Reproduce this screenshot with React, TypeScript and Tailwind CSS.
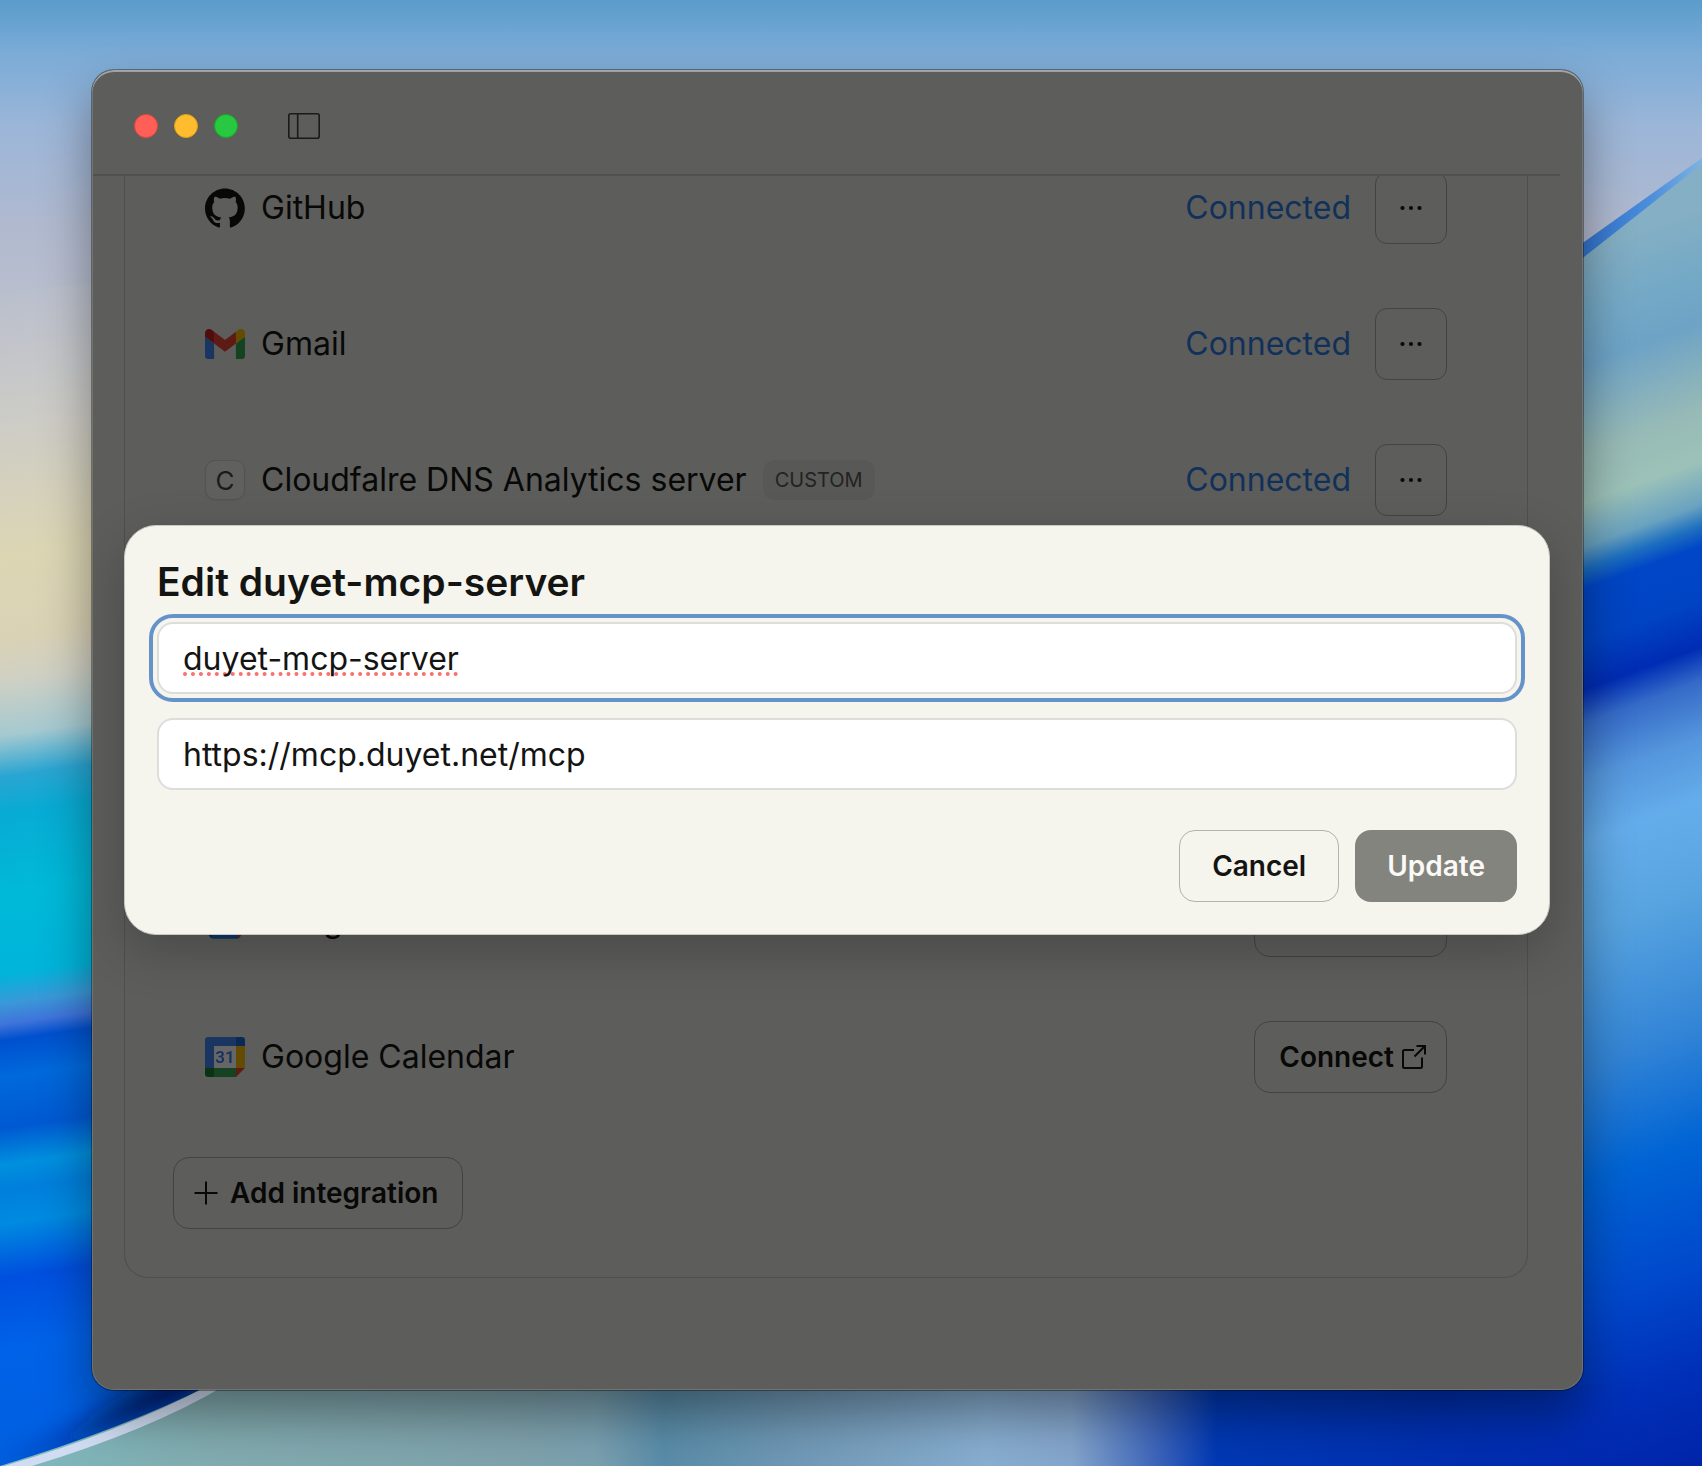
import React from 'react';

function Wallpaper() {
  return (
    <svg
      className="absolute inset-0 h-full w-full"
      viewBox="0 0 1702 1466"
      preserveAspectRatio="none"
      aria-hidden="true"
    >
      <defs>
        <linearGradient id="sky" gradientUnits="userSpaceOnUse" x1="0" y1="0" x2="0" y2="320">
          <stop offset="0" stopColor="#5a9ccb" />
          <stop offset="0.16" stopColor="#7aabd7" />
          <stop offset="0.4" stopColor="#9cb6d8" />
          <stop offset="0.7" stopColor="#b0b9cf" />
          <stop offset="1" stopColor="#bcc0cd" />
        </linearGradient>
        <linearGradient id="left" gradientUnits="userSpaceOnUse" x1="0" y1="0" x2="0" y2="1466">
          <stop offset="0.2" stopColor="#babfcd" />
          <stop offset="0.29" stopColor="#cdccc6" />
          <stop offset="0.38" stopColor="#dcd6b4" />
          <stop offset="0.435" stopColor="#dad2b5" />
          <stop offset="0.465" stopColor="#cfd0c4" />
          <stop offset="0.502" stopColor="#a5c9d0" />
          <stop offset="0.53" stopColor="#2aa5d2" />
          <stop offset="0.555" stopColor="#08abd4" />
          <stop offset="0.61" stopColor="#00b9d8" />
          <stop offset="0.665" stopColor="#00b4da" />
          <stop offset="0.685" stopColor="#3a98d8" />
          <stop offset="0.699" stopColor="#3f74da" />
          <stop offset="0.71" stopColor="#0050ce" />
          <stop offset="0.735" stopColor="#0069db" />
          <stop offset="0.77" stopColor="#0059d2" />
          <stop offset="0.795" stopColor="#0090de" />
          <stop offset="0.812" stopColor="#007fdc" />
          <stop offset="0.835" stopColor="#008ae0" />
          <stop offset="0.872" stopColor="#004fde" />
          <stop offset="0.92" stopColor="#0062e8" />
          <stop offset="1" stopColor="#005fe0" />
        </linearGradient>
        <linearGradient id="right" gradientUnits="userSpaceOnUse" x1="0" y1="252" x2="0" y2="1510">
          <stop offset="0" stopColor="#84afc4" />
          <stop offset="0.05" stopColor="#74a9c6" />
          <stop offset="0.09" stopColor="#6ea3c6" />
          <stop offset="0.16" stopColor="#97bab6" />
          <stop offset="0.2" stopColor="#9cc2b8" />
          <stop offset="0.235" stopColor="#69a2c0" />
          <stop offset="0.252" stopColor="#1e70c0" />
          <stop offset="0.268" stopColor="#0046c6" />
          <stop offset="0.31" stopColor="#0044c4" />
          <stop offset="0.348" stopColor="#002cb4" />
          <stop offset="0.375" stopColor="#356bc8" />
          <stop offset="0.42" stopColor="#5596dc" />
          <stop offset="0.47" stopColor="#64adeb" />
          <stop offset="0.54" stopColor="#58a4e0" />
          <stop offset="0.65" stopColor="#3284d6" />
          <stop offset="0.74" stopColor="#0064d4" />
          <stop offset="0.84" stopColor="#0048cc" />
          <stop offset="0.92" stopColor="#0030b8" />
          <stop offset="1" stopColor="#0024a8" />
        </linearGradient>
        <linearGradient id="bottom" gradientUnits="userSpaceOnUse" x1="0" y1="1466" x2="1702" y2="1466">
          <stop offset="0" stopColor="#7cb9be" />
          <stop offset="0.12" stopColor="#82acb0" />
          <stop offset="0.3" stopColor="#7fa2ac" />
          <stop offset="0.35" stopColor="#7aa0b0" />
          <stop offset="0.39" stopColor="#598ca8" />
          <stop offset="0.47" stopColor="#7199b6" />
          <stop offset="0.58" stopColor="#88aed0" />
          <stop offset="0.63" stopColor="#84a5cc" />
          <stop offset="0.68" stopColor="#3c64ba" />
          <stop offset="0.715" stopColor="#0038b4" />
          <stop offset="0.85" stopColor="#002fb0" />
          <stop offset="0.95" stopColor="#0028ac" stopOpacity="0" />
        </linearGradient>
        <linearGradient id="edge" x1="0" y1="0" x2="1" y2="0">
          <stop offset="0" stopColor="#2f6fca" />
          <stop offset="0.6" stopColor="#4a8ddb" />
          <stop offset="1" stopColor="#7fb2e2" />
        </linearGradient>
        <filter id="soft" x="-20%" y="-20%" width="140%" height="140%">
          <feGaussianBlur stdDeviation="12" />
        </filter>
      </defs>
      <g transform="skewY(-8)">
        <rect x="-10" y="200" width="860" height="1500" fill="url(#left)" />
      </g>
      <g transform="translate(1583 0) skewY(-20)">
        <rect x="-733" y="100" width="860" height="1652" fill="url(#right)" />
      </g>
      <path d="M0 0H1702V160L1583 250L850 700L300 260L0 293Z" fill="url(#sky)" />
      <path d="M1570 252L1702 158V164L1570 268Z" fill="url(#edge)" />
      <path d="M0 1466Q130 1425 215 1385L180 1370L60 1440Z" fill="#00145e" filter="url(#soft)" />
      <path d="M0 1466Q125 1428 212 1384H1702V1466Z" fill="url(#bottom)" />
      <path d="M4 1466Q120 1432 208 1386H224Q150 1430 32 1466Z" fill="#cfdcf2" />
    </svg>
  );
}

function GitHubIcon() {
  return (
    <svg viewBox="0 0 98 96" className="h-10 w-10 shrink-0" fill="#080808" aria-hidden="true">
      <path
        fillRule="evenodd"
        clipRule="evenodd"
        d="M48.854 0C21.839 0 0 22 0 49.217c0 21.756 13.993 40.172 33.405 46.69 2.427.49 3.316-1.059 3.316-2.362 0-1.141-.08-5.052-.08-9.127-13.59 2.934-16.42-5.867-16.42-5.867-2.184-5.704-5.42-7.17-5.42-7.17-4.448-3.015.324-3.015.324-3.015 4.934.326 7.523 5.052 7.523 5.052 4.367 7.496 11.404 5.378 14.235 4.074.404-3.178 1.699-5.378 3.074-6.6-10.839-1.141-22.243-5.378-22.243-24.283 0-5.378 1.94-9.778 5.014-13.2-.485-1.222-2.184-6.275.486-13.038 0 0 4.125-1.304 13.426 5.052a46.97 46.97 0 0 1 12.214-1.63c4.125 0 8.33.571 12.213 1.63 9.302-6.356 13.427-5.052 13.427-5.052 2.67 6.763.97 11.816.485 13.038 3.155 3.422 5.015 7.822 5.015 13.2 0 18.905-11.404 23.06-22.324 24.283 1.78 1.548 3.316 4.481 3.316 9.126 0 6.6-.08 11.897-.08 13.526 0 1.304.89 2.853 3.316 2.364 19.412-6.52 33.405-24.935 33.405-46.691C97.707 22 75.788 0 48.854 0z"
      />
    </svg>
  );
}

function GmailIcon() {
  return (
    <svg viewBox="52 42 88 66" className="w-10 shrink-0 brightness-[0.4]" aria-hidden="true">
      <path fill="#4285f4" d="M58 108h14V74L52 59v43c0 3.32 2.69 6 6 6" />
      <path fill="#34a853" d="M120 108h14c3.32 0 6-2.69 6-6V59l-20 15" />
      <path fill="#fbbc04" d="M120 48v26l20-15v-8c0-7.42-8.47-11.65-14.4-7.2" />
      <path fill="#ea4335" d="M72 74V48l24 18 24-18v26L96 92" />
      <path fill="#c5221f" d="M52 51v8l20 15V48l-5.6-4.2c-5.94-4.45-14.4-.22-14.4 7.2" />
    </svg>
  );
}

function DriveIcon() {
  return (
    <svg viewBox="0 0 87.3 78" className="w-10 shrink-0 brightness-[0.4]" aria-hidden="true">
      <path fill="#0066da" d="m6.6 66.85 3.85 6.65c.8 1.4 1.95 2.5 3.3 3.3l13.75-23.8h-27.5c0 1.55.4 3.1 1.2 4.5z" />
      <path fill="#00ac47" d="m43.65 25-13.75-23.8c-1.35.8-2.5 1.9-3.3 3.3l-25.4 44a9.06 9.06 0 0 0 -1.2 4.5h27.5z" />
      <path fill="#ea4335" d="m73.55 76.8c1.35-.8 2.5-1.9 3.3-3.3l1.6-2.75 7.65-13.25c.8-1.4 1.2-2.95 1.2-4.5h-27.502l5.852 11.5z" />
      <path fill="#00832d" d="m43.65 25 13.75-23.8c-1.35-.8-2.9-1.2-4.5-1.2h-18.5c-1.6 0-3.15.45-4.5 1.2z" />
      <path fill="#2684fc" d="m59.8 53h-32.3l-13.75 23.8c1.35.8 2.9 1.2 4.5 1.2h50.8c1.6 0 3.15-.45 4.5-1.2z" />
      <path fill="#ffba00" d="m73.4 26.5-12.7-22c-.8-1.4-1.95-2.5-3.3-3.3l-13.75 23.8 16.15 28h27.45c0-1.55-.4-3.1-1.2-4.5z" />
    </svg>
  );
}

function CalendarIcon() {
  return (
    <svg viewBox="0 0 40 40" className="h-10 w-10 shrink-0 brightness-[0.4]" aria-hidden="true">
      <path fill="#fff" d="M9 9h22v22H9z" />
      <path fill="#4285f4" d="M31 0H3a3 3 0 0 0-3 3v28h9V9h22z" />
      <path fill="#1967d2" d="M31 0v9h9V3a3 3 0 0 0-3-3z" />
      <path fill="#fbbc04" d="M31 9h9v22h-9z" />
      <path fill="#34a853" d="M9 31h22v9H9z" />
      <path fill="#188038" d="M0 31v6a3 3 0 0 0 3 3h6v-9z" />
      <path fill="#ea4335" d="M31 40l9-9h-9z" />
      <text x="20" y="26" textAnchor="middle" fontFamily="Roboto, sans-serif" fontWeight="600" fontSize="17" fill="#3c7ef0">
        31
      </text>
    </svg>
  );
}

function LetterIcon() {
  return (
    <span className="flex h-10 w-10 shrink-0 items-center justify-center rounded-[10px] border border-[#535351] bg-[#60605f] text-[26px] text-[#1b1b1a] shadow-xs">
      C
    </span>
  );
}

function ExternalIcon() {
  return (
    <svg viewBox="0 0 24 24" className="h-6 w-6" fill="none" stroke="currentColor" strokeWidth="2" strokeLinejoin="round" aria-hidden="true">
      <path d="M12 5H2.5A1.5 1.5 0 0 0 1 6.500V21.500A1.5 1.5 0 0 0 2.500 23H18.500A1.500 1.500 0 0 0 20 21.500V12.500" />
      <path d="M14.500 1H23V9.500M23 1L12.500 11.500" strokeLinejoin="miter" />
    </svg>
  );
}

const connected = [
  { name: 'GitHub', icon: <GitHubIcon /> },
  { name: 'Gmail', icon: <GmailIcon /> },
  { name: 'Cloudfalre DNS Analytics server', icon: <LetterIcon />, custom: true },
];

const available = [
  { name: 'Google Drive', icon: <DriveIcon /> },
  { name: 'Google Calendar', icon: <CalendarIcon /> },
];

function Settings() {
  return (
    <div className="overflow-hidden pr-[55px] pb-28 pl-8">
      <div className="-mt-1 rounded-b-3xl border border-t-0 border-[#4f4f4d] px-12 pb-12">
        <ul className="flex flex-col gap-16 px-8">
          {connected.map((item) => (
            <li key={item.name} className="flex items-center gap-4">
              {item.icon}
              <span className="text-[32px]">{item.name}</span>
              {item.custom && (
                <span className="flex h-10 items-center rounded-xl bg-[#585856] px-3 text-xl text-[#232322]">
                  CUSTOM
                </span>
              )}
              <div className="ml-auto flex items-center gap-6">
                <span className="text-[32px] text-[#11315a]">Connected</span>
                <button
                  type="button"
                  aria-label={`Options for ${item.name}`}
                  className="flex h-18 w-18 items-center justify-center rounded-xl border border-[#434341]"
                >
                  <svg viewBox="0 0 24 24" className="h-6 w-6" fill="currentColor" aria-hidden="true">
                    <circle cx="3.500" cy="12" r="2.100" />
                    <circle cx="12" cy="12" r="2.100" />
                    <circle cx="20.500" cy="12" r="2.100" />
                  </svg>
                </button>
              </div>
            </li>
          ))}
        </ul>
        <ul className="mt-[369px] flex flex-col gap-16 px-8">
          {available.map((item) => (
            <li key={item.name} className="flex items-center gap-4">
              {item.icon}
              <span className="text-[32px]">{item.name}</span>
              <button
                type="button"
                className="ml-auto flex h-18 items-center gap-2 rounded-2xl border border-[#434341] pr-5 pl-6 text-[28px] font-semibold"
              >
                Connect
                <ExternalIcon />
              </button>
            </li>
          ))}
        </ul>
        <button
          type="button"
          className="mt-16 flex h-18 items-center gap-3 rounded-2xl border border-[#434341] pr-6 pl-5 text-[28px] font-semibold"
        >
          <svg viewBox="0 0 24 24" className="h-6 w-6" fill="none" stroke="currentColor" strokeWidth="2" aria-hidden="true">
            <path d="M0.500 12H23.500M12 0.500V23.500" />
          </svg>
          Add integration
        </button>
      </div>
    </div>
  );
}

function EditDialog() {
  return (
    <div className="absolute inset-0 flex items-center pr-[33px] pl-8">
      <form
        role="dialog"
        aria-labelledby="dialog-title"
        className="w-full rounded-[32px] border border-[#c9c9c4] bg-[#f5f4ed] p-8 text-[#141413] shadow-[0_16px_50px_rgba(0,0,0,0.22)]"
      >
        <h2 id="dialog-title" className="mb-4 text-[39px] leading-12 font-semibold">
          Edit duyet-mcp-server
        </h2>
        <div className="flex flex-col gap-6">
          <input
            aria-label="Name"
            defaultValue="duyet-mcp-server"
            spellCheck={false}
            className="h-18 w-full rounded-2xl border-2 border-[#dddddc] bg-white px-6 text-[32px] underline decoration-[#fb6f6c] decoration-dotted decoration-4 underline-offset-3 outline-4 outline-offset-4 outline-[#6593c9] [text-decoration-skip-ink:none]"
          />
          <input
            aria-label="URL"
            defaultValue="https://mcp.duyet.net/mcp"
            spellCheck={false}
            className="h-18 w-full rounded-2xl border-2 border-[#dddddc] bg-white px-6 text-[32px]"
          />
        </div>
        <div className="mt-10 flex justify-end gap-4 text-[28px] font-semibold">
          <button type="button" className="h-18 rounded-2xl border border-[#b2b2ae] px-8">
            Cancel
          </button>
          <button type="submit" className="h-18 rounded-2xl bg-[#84847f] px-8 text-[#faf9f5]">
            Update
          </button>
        </div>
      </form>
    </div>
  );
}

export default function App() {
  return (
    <div className="relative min-h-screen overflow-hidden bg-[#0048cc] pt-[70px] pr-[119px] pb-[76px] pl-[92px] font-['Inter',sans-serif] text-[#080807]">
      <Wallpaper />
      <main className="relative overflow-hidden rounded-[22px] bg-[#5d5d5b] shadow-[0_0_0_1px_rgba(0,0,0,0.35),0_24px_50px_rgba(0,0,0,0.4)]">
        <header className="flex h-26 items-center pt-2 pl-[42px]">
          <div className="flex gap-4">
            <button type="button" aria-label="Close" className="h-6 w-6 rounded-full border border-[#e2463f] bg-[#ff5f57]" />
            <button type="button" aria-label="Minimize" className="h-6 w-6 rounded-full border border-[#e1a116] bg-[#febc2e]" />
            <button type="button" aria-label="Zoom" className="h-6 w-6 rounded-full border border-[#12ac28] bg-[#28c840]" />
          </div>
          <button type="button" aria-label="Toggle sidebar" className="ml-[50px]">
            <svg viewBox="0 0 32 26" className="h-[26px] w-8" fill="none" stroke="#1a1a19" strokeWidth="1.600" aria-hidden="true">
              <rect x="0.800" y="0.800" width="30.400" height="24.400" rx="2" />
              <path d="M9.700 1V25" />
            </svg>
          </button>
        </header>
        <div className="mr-[23px] h-0.5 bg-[#50504e]" />
        <Settings />
        <div className="pointer-events-none absolute inset-0 rounded-[22px] shadow-[inset_0_2px_0_rgba(190,190,188,0.7),inset_0_0_0_1px_#72726f]" />
        <EditDialog />
      </main>
    </div>
  );
}
